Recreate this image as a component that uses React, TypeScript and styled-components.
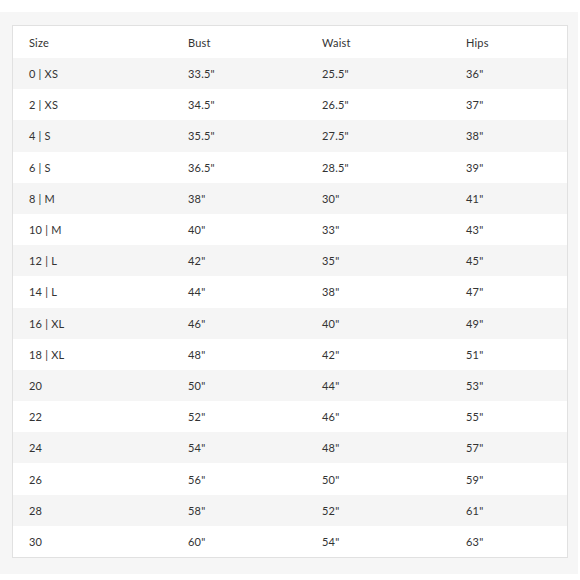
import styled, { createGlobalStyle } from 'styled-components'

/* --------------------- Style --------------------- */
const Global = createGlobalStyle`
  body {
    margin: 0;
    background: #ffffff;
    font-family: "Lato", "Liberation Sans", sans-serif;
    color: #333333;
  }
`
const Panel = styled.div`
  margin-top: 12px;
  width: 578px;
  box-sizing: border-box;
  padding: 13px 10px 16px 12px;
  background: #f6f6f6;
`
const Card = styled.div`
  width: 556px;
  box-sizing: border-box;
  background: #ffffff;
  border: solid 1px #e1e1e1;
`
const Row = styled.div<{ $head?: boolean; $shade?: boolean }>`
  display: grid;
  grid-template-columns: 159px 134px 144px 1fr;
  align-items: center;
  height: ${(p) => (p.$head ? '32px' : '31.2px')};
  padding-left: 16px;
  background: ${(p) => (p.$shade ? '#f5f5f5' : '#ffffff')};
  font-size: 11px;
  letter-spacing: 0.2px;
`
const Cell = styled.span`
  white-space: nowrap;
`
/* ------------------------------------------------- */

const rows: [string, string, string, string][] = [
  ['0 | XS', '33.5"', '25.5"', '36"'],
  ['2 | XS', '34.5"', '26.5"', '37"'],
  ['4 | S', '35.5"', '27.5"', '38"'],
  ['6 | S', '36.5"', '28.5"', '39"'],
  ['8 | M', '38"', '30"', '41"'],
  ['10 | M', '40"', '33"', '43"'],
  ['12 | L', '42"', '35"', '45"'],
  ['14 | L', '44"', '38"', '47"'],
  ['16 | XL', '46"', '40"', '49"'],
  ['18 | XL', '48"', '42"', '51"'],
  ['20', '50"', '44"', '53"'],
  ['22', '52"', '46"', '55"'],
  ['24', '54"', '48"', '57"'],
  ['26', '56"', '50"', '59"'],
  ['28', '58"', '52"', '61"'],
  ['30', '60"', '54"', '63"'],
]

const App: React.FC = () => {
  return (
    <>
      <Global />
      <Panel>
        <Card>
          <Row $head>
            <Cell>Size</Cell>
            <Cell>Bust</Cell>
            <Cell>Waist</Cell>
            <Cell>Hips</Cell>
          </Row>
          {rows.map((r, i) => (
            <Row key={r[0]} $shade={i % 2 === 0}>
              {r.map((c, j) => (
                <Cell key={j}>{c}</Cell>
              ))}
            </Row>
          ))}
        </Card>
      </Panel>
    </>
  )
}
export default App
